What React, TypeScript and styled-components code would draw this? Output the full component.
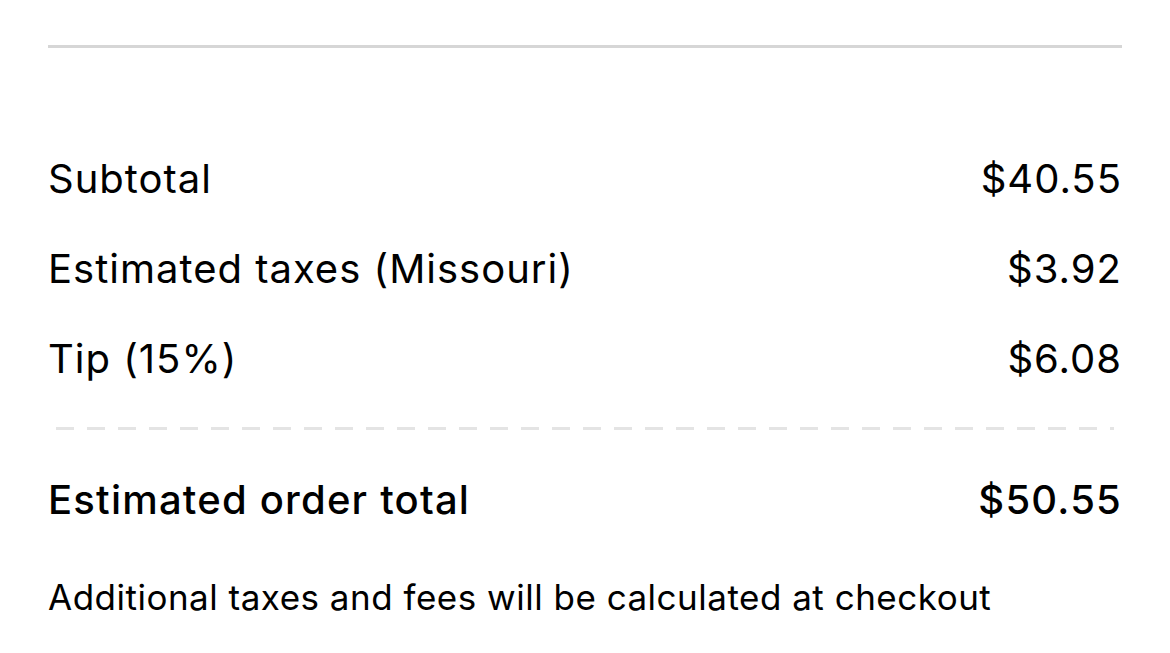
import styled, { createGlobalStyle } from 'styled-components';

const GlobalStyle = createGlobalStyle`
    html, body {
        margin: 0;
        padding: 0;
        background: #ffffff;
    }
    body {
        font-family: Inter, "Noto Sans", sans-serif;
        color: #000000;
    }
`;

const Wrapper = styled.div`
    padding: 45px 48px 0 48px;
`;

const TopRule = styled.div`
    height: 3px;
    background: #d6d6d6;
`;

const Lines = styled.div`
    display: flex;
    flex-direction: column;
    margin-top: 85px;
`;

const Row = styled.div<{ $bold?: boolean }>`
    display: flex;
    justify-content: space-between;
    align-items: center;
    height: 90px;
    font-size: 40px;
    letter-spacing: ${p => (p.$bold ? '1.2px' : '1px')};
    font-weight: ${p => (p.$bold ? 500 : 400)};
`;

const Dashed = styled.div`
    margin: 24px 8px 24px 8px;
    height: 3px;
    background-image: linear-gradient(to right, #e4e4e4 0, #e4e4e4 18px, transparent 18px);
    background-size: 31px 3px;
    background-repeat: repeat-x;
`;

const Note = styled.p`
    margin: 28px 0 0 0;
    font-size: 35px;
    line-height: 50px;
    letter-spacing: 0.5px;
`;

const items = [
    { label: 'Subtotal', value: '$40.55' },
    { label: 'Estimated taxes (Missouri)', value: '$3.92' },
    { label: 'Tip (15%)', value: '$6.08' },
];

const App = () => {
    return (
        <>
            <GlobalStyle />
            <Wrapper>
                <TopRule />
                <Lines>
                    {items.map(item => (
                        <Row key={item.label}>
                            <span>{item.label}</span>
                            <span>{item.value}</span>
                        </Row>
                    ))}
                    <Dashed />
                    <Row $bold>
                        <span>Estimated order total</span>
                        <span>$50.55</span>
                    </Row>
                </Lines>
                <Note>Additional taxes and fees will be calculated at checkout</Note>
            </Wrapper>
        </>
    );
};

export default App;
